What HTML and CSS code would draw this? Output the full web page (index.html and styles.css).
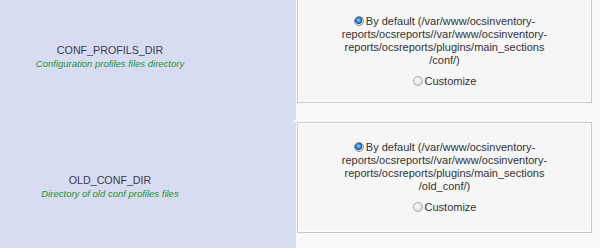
FILE: index.html
```html
<!DOCTYPE html>
<html>
<head>
<meta charset="utf-8">
<link rel="stylesheet" href="styles.css">
</head>
<body>
<div class="page">
  <div class="row">
    <div class="label-cell">
      <div class="label-inner">
        <div class="name">CONF_PROFILS_DIR</div>
        <div class="desc">Configuration profiles files directory</div>
      </div>
    </div>
    <div class="value-cell">
      <div class="box box-first">
        <div class="opt opt-default">
          <span class="radio checked"></span>By default (/var/www/ocsinventory-<br>reports/ocsreports//var/www/ocsinventory-<br>reports/ocsreports/plugins/main_sections<br>/conf/)
        </div>
        <div class="opt opt-custom"><span class="radio"></span>Customize</div>
      </div>
    </div>
  </div>
  <div class="row">
    <div class="label-cell">
      <div class="label-inner">
        <div class="name">OLD_CONF_DIR</div>
        <div class="desc">Directory of old conf profiles files</div>
      </div>
    </div>
    <div class="value-cell">
      <div class="box">
        <div class="opt opt-default">
          <span class="radio checked"></span>By default (/var/www/ocsinventory-<br>reports/ocsreports//var/www/ocsinventory-<br>reports/ocsreports/plugins/main_sections<br>/old_conf/)
        </div>
        <div class="opt opt-custom"><span class="radio"></span>Customize</div>
      </div>
    </div>
  </div>
</div>
</body>
</html>
```
FILE: styles.css
```css
html, body {
  margin: 0;
  padding: 0;
  background: #fafafa;
  overflow: hidden;
}
body {
  font-family: "Liberation Sans", Arial, sans-serif;
  color: #333;
}
.page {
  margin-top: -8px;
}
.row {
  display: grid;
  grid-template-columns: 296px 1fr;
  height: 130px;
}
.label-cell {
  background: #d8dcf2;
  display: flex;
  align-items: center;
  padding-right: 76px;
  position: relative;
}
.label-cell::after {
  content: "";
  position: absolute;
  right: 0;
  bottom: -3px;
  border-right: 4px solid rgba(255,255,255,0.8);
  border-top: 3px solid transparent;
  border-bottom: 3px solid transparent;
}
.label-inner {
  width: 100%;
  text-align: center;
}
.name {
  font-size: 10.7px;
  line-height: 13px;
  color: #3a3a46;
}
.desc {
  font-size: 9.5px;
  line-height: 13px;
  font-style: italic;
  color: #1e9130;
}
.value-cell {
  padding: 0 8px 19px 1px;
}
.box {
  height: 111px;
  box-sizing: border-box;
  border: 1px solid #c8c8c8;
  box-shadow: inset 0 0 0 1px #ffffff;
  background: #f6f6f6;
  display: flex;
  flex-direction: column;
  justify-content: center;
  align-items: center;
  font-size: 11px;
  line-height: 13px;
  color: #333;
  text-align: center;
}
.box-first {
  padding-top: 7px;
}
.opt {
  white-space: nowrap;
}
.opt-custom {
  margin-top: 8px;
}
.radio {
  display: inline-block;
  width: 10px;
  height: 10px;
  border-radius: 50%;
  box-sizing: border-box;
  border: 1px solid #a8a8a8;
  background: radial-gradient(circle at 40% 35%, #ffffff 0%, #e4e4e4 60%, #cfcfcf 100%);
  vertical-align: -1px;
  margin-right: 2px;
}
.radio.checked {
  border-color: #8a8a8a;
  background: radial-gradient(circle at 45% 40%, #9fd3ff 0%, #2f86d8 35%, #1b4f8f 55%, #f0f0f0 62%, #d0d0d0 100%);
}
```
